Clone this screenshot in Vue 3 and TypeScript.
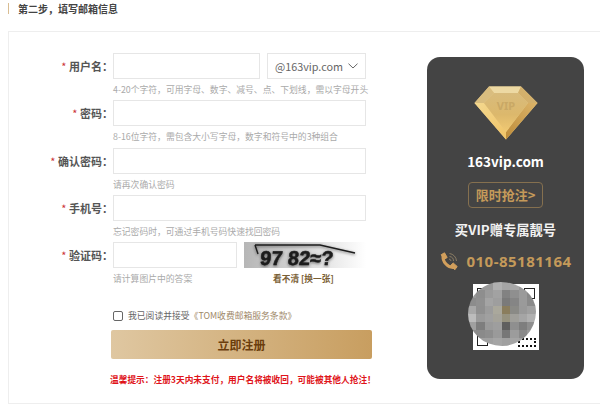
<script setup lang="ts">
interface Field { label: string; hint: string; kind?: 'user' | 'captcha' }
const C = '\uFF0C'
const K = '\uFF1A'
const title = `第二步${C}填写邮箱信息`
const warning = `温馨提示${K}注册3天内未支付${C}用户名将被收回${C}可能被其他人抢注\uFF01`
const fields: Field[] = [
  { label: `用户名${K}`, hint: `4-20个字符${C}可用字母、数字、减号、点、下划线${C}需以字母开头`, kind: 'user' },
  { label: `密码${K}`, hint: `8-16位字符${C}需包含大小写字母${C}数字和符号中的3种组合` },
  { label: `确认密码${K}`, hint: '请再次确认密码' },
  { label: `手机号${K}`, hint: `忘记密码时${C}可通过手机号码快速找回密码` },
  { label: `验证码${K}`, hint: '请计算图片中的答案', kind: 'captcha' },
]
const mosaic: string[] = [
  '#999','#999','#999','#b0b0b0','#a5a5a5','#a8a8a8','#999','#999',
  '#999','#8e8e8e','#9b9b9b','#a2a2a2','#828282','#8f8f8f','#9a9a9a','#888',
  '#8c8c8c','#909090','#a4a4a4','#9e9e9e','#7a7a7a','#858585','#9a9a9a','#8a8a8a',
  '#a8a8a8','#8f8f8f','#9c9c9c','#aaa89c','#8a7d5d','#8a8a86','#999','#a0a0a0',
  '#bcbcbc','#9a9a9a','#a0a0a0','#a5a39a','#96927f','#a09f9a','#a5a5a5','#b0b0b0',
  '#a0a0a0','#7e7e7e','#9a9a9a','#9e9e9e','#5f5f5f','#8f8f8f','#7e7e7e','#8e8e8e',
  '#8c8c8c','#8a8a8a','#8e8e8e','#9a9a9a','#777','#9c9c9c','#8a8a8a','#999',
  '#a0a0a0','#a0a0a0','#a0a0a0','#a5a5a5','#a0a0a0','#a5a5a5','#a0a0a0','#a0a0a0',
]
</script>

<template>
  <div class="page">
    <h2 class="step">{{ title }}</h2>
    <div class="card">
      <div class="form">
        <div v-for="f in fields" :key="f.label" class="row">
          <label class="label"><i>*</i> {{ f.label }}</label>
          <div class="body">
            <div class="controls">
              <div class="input" :class="{ short: f.kind === 'user', mid: f.kind === 'captcha' }"></div>
              <div v-if="f.kind === 'user'" class="select">
                <span>@163vip.com</span>
                <svg width="10" height="6" viewBox="0 0 10 6"><path d="M.5 .7L5 5l4.500-4.300" fill="none" stroke="#666" stroke-width="1"/></svg>
              </div>
              <svg v-if="f.kind === 'captcha'" class="captcha" width="122" height="26" viewBox="0 0 122 26">
                <defs>
                  <linearGradient id="cg" x1="0" x2="1" y1="0" y2="0">
                    <stop offset="0" stop-color="#b6b6b6"/>
                    <stop offset=".5" stop-color="#d8d8d8"/>
                    <stop offset="1" stop-color="#ffffff"/>
                  </linearGradient>
                </defs>
                <rect width="122" height="26" fill="url(#cg)"/>
                <g class="captcha-ink">
                  <text x="15" y="23" class="captcha-text" transform="skewX(-6) translate(3 0)">97 82≈?</text>
                  <path d="M11 3H76L111 11M11 3L14 12" stroke="#1c1c1c" stroke-width="1.400" fill="none"/>
                </g>
              </svg>
            </div>
            <div class="hint-row">
              <p class="hint">{{ f.hint }}</p>
              <a v-if="f.kind === 'captcha'" class="refresh">看不清 [换一张]</a>
            </div>
          </div>
        </div>
        <div class="agree">
          <span class="check"></span>
          <span>我已阅读并接受</span><span class="terms">《TOM收费邮箱服务条款》</span>
        </div>
        <button class="submit">立即注册</button>
        <p class="warn">{{ warning }}</p>
      </div>
      <aside class="panel">
        <svg class="gem" width="64" height="54" viewBox="0 0 64 54">
          <defs>
            <linearGradient id="g2" x1="0" x2="0" y1="0" y2="1">
              <stop offset="0" stop-color="#d8bb7c"/><stop offset=".55" stop-color="#dcb86c"/><stop offset="1" stop-color="#f1c972"/>
            </linearGradient>
            <linearGradient id="gl" x1="0" x2="1" y1="0" y2="1">
              <stop offset="0" stop-color="#f4d88f"/><stop offset="1" stop-color="#f0c468"/>
            </linearGradient>
            <linearGradient id="gr" x1="1" x2="0" y1="0" y2="1">
              <stop offset="0" stop-color="#dcb469"/><stop offset="1" stop-color="#bd8c3a"/>
            </linearGradient>
          </defs>
          <path d="M15 .5H47L63.500 17 32 53.500 .5 17Z" fill="#e6c884"/>
          <path d="M15 .5L20 7H44L47 .5Z" fill="#edd9a3"/>
          <path d="M15 .5L.5 17H10L20 7Z" fill="#d9bd7f"/>
          <path d="M47 .5L63.500 17H54L44 7Z" fill="#d3b06c"/>
          <path d="M.5 17H10L32 46V53.500Z" fill="url(#gl)"/>
          <path d="M63.500 17H54L32 46V53.500Z" fill="url(#gr)"/>
          <path d="M20 7H44L54 17 32 46 10 17Z" fill="url(#g2)"/>
          <text x="32" y="24" text-anchor="middle" class="vip">VIP</text>
        </svg>
        <div class="domain">163vip.com</div>
        <div class="rush">限时抢注&gt;</div>
        <div class="slogan">买VIP赠专属靓号</div>
        <div class="tel">
          <svg width="19" height="19" viewBox="0 0 19 19">
            <path d="M4.200 3.500C3 9.500 9 16.500 15.500 15.300" fill="none" stroke="#d29f5c" stroke-width="3"/>
            <path d="M2.200 2.700L5.500 .8 8.200 5.500 5 7.500ZM11.500 13.500L14.200 11 18.200 14.500 15.800 17.800Z" fill="#d29f5c" stroke="#d29f5c" stroke-linejoin="round"/>
            <path d="M10.500 4.500a4.500 4.500 0 0 1 4 4.500M10.500 1.500a8 8 0 0 1 7 7.500M10 7a2.300 2.300 0 0 1 2 2" fill="none" stroke="#8a7c64" stroke-width="1"/>
          </svg>
          <span>010-85181164</span>
        </div>
        <div class="qr">
          <span class="corner tl"></span><span class="corner tr"></span><span class="corner bl"></span><span class="corner br"></span>
          <div class="blob">
            <span v-for="(c, i) in mosaic" :key="i" :style="{ background: c }"></span>
          </div>
        </div>
      </aside>
    </div>
  </div>
</template>

<style>
html, body { margin: 0; background: #fff; }
</style>

<style scoped>
.page {
  width: 600px; height: 405px; overflow: hidden; box-sizing: border-box; padding-top: 3px;
  font-family: "Noto Sans CJK SC", "Noto Sans", sans-serif; color: #333;
}
.step {
  margin: 0 0 0 8px; padding-left: 9px; border-left: 1.500px solid #d9bd92; height: 11px;
  font-size: 10px; line-height: 11px; font-weight: 700; color: #444;
}
.card {
  display: flex; margin: 17px -10px 0 8px; height: 373px; box-sizing: border-box;
  border: 1px solid #eee; padding: 21px 0 0 0;
}
.form { width: 418px; flex: none; }
.row { display: flex; height: 47.300px; }
.label {
  width: 104px; flex: none; height: 26px; line-height: 26px; text-align: right;
  font-size: 11px; font-weight: 700; color: #555; white-space: nowrap;
}
.label i { color: #c33; font-style: normal; font-weight: 400; }
.body { width: 253px; flex: none; }
.controls { display: flex; justify-content: space-between; height: 26px; }
.input { flex: 1; box-sizing: border-box; height: 26px; border: 1px solid #e6e6e6; background: #fff; }
.input.short { flex: none; width: 147px; }
.input.mid { flex: none; width: 124px; }
.select {
  width: 99px; box-sizing: border-box; height: 26px; border: 1px solid #e6e6e6;
  display: flex; align-items: center; justify-content: space-between; padding: 0 7px;
  font-size: 10.800px; color: #666; white-space: nowrap;
}
.captcha { display: block; filter: blur(.6px); }
.captcha-ink { filter: drop-shadow(0 1px 1.500px rgba(0, 0, 0, .55)); }
.captcha-text { font: 700 20px "Liberation Sans", sans-serif; fill: #1c1c1c; stroke: #1c1c1c; stroke-width: .5px; }
.hint-row { display: flex; height: 21.300px; align-items: center; position: relative; }
.hint { margin: 0; font-size: 8.800px; color: #aaa; white-space: nowrap; }
.refresh { position: absolute; left: 160px; font-size: 8.700px; font-weight: 700; color: #7a6035; white-space: nowrap; }
.agree {
  display: flex; align-items: center; margin: 19.500px 0 0 104px; height: 14px;
  font-size: 8.800px; color: #666; white-space: nowrap;
}
.check {
  width: 8px; height: 8px; border: 1px solid #666; border-radius: 2px; margin-right: 5px; background: #fff;
}
.terms { color: #a08868; }
.submit {
  display: block; width: 261px; height: 29px; margin: 7px 0 0 102px; padding: 0; border: 0; border-radius: 2px;
  background: linear-gradient(90deg, #dfc7a1, #c89e60);
  font: 700 12px "Noto Sans CJK SC", sans-serif; color: #6b3d0c;
}
.warn {
  margin: 14px 0 0 101px; font-size: 8.700px; line-height: 13px; font-weight: 700; color: #e0141a; white-space: nowrap;
}
.panel {
  position: relative; width: 157px; height: 322px; margin: 4px 0 0 0; flex: none; box-sizing: border-box;
  background: #444; border-radius: 13px; padding-top: 29px;
  display: flex; flex-direction: column; align-items: center;
}
.vip { font: 700 11px "Noto Sans", sans-serif; fill: #c9a865; }
.gem { display: block; }
.domain { margin-top: 11px; font-size: 13.500px; line-height: 20px; font-weight: 700; color: #fff; }
.rush {
  margin-top: 11px; width: 75px; height: 26px; box-sizing: border-box; border: 1px solid #85704f; border-radius: 4px;
  text-align: center; font-size: 13px; line-height: 24px; font-weight: 700; color: #c49a5a;
}
.slogan { margin-top: 12px; font-size: 13.300px; line-height: 20px; font-weight: 700; color: #f2f2f2; }
.tel {
  margin-top: 11px; display: flex; align-items: center; gap: 8px; height: 20px;
  font-family: "Open Sans", sans-serif; font-size: 15px; font-weight: 700; letter-spacing: .5px; color: #c49a5a;
}
.qr { position: relative; margin-top: 13px; width: 66px; height: 66px; background: #fff; }
.corner { position: absolute; width: 9px; height: 9px; border: 1.500px solid #222; }
.tl { left: 4px; top: 4px; } .tr { right: 4px; top: 4px; } .bl { left: 4px; bottom: 4px; }
.br { right: 3px; bottom: 3px; width: 14px; height: 5px; border: 2px dotted #111; }
.blob {
  position: absolute; left: -5px; top: -2px; width: 68px; height: 64px;
  display: grid; grid-template-columns: repeat(8, 8.500px); grid-auto-rows: 8px;
  border-radius: 48% 52% 50% 50% / 50% 46% 54% 50%; overflow: hidden; filter: blur(.4px);
}
</style>
